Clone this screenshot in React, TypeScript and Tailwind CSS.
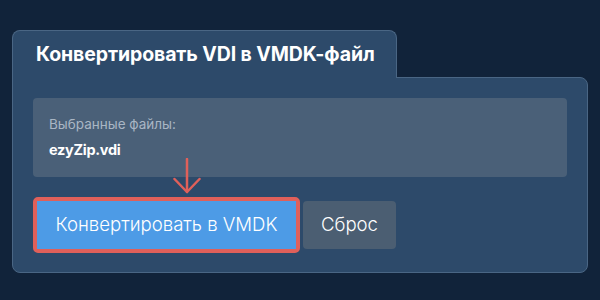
import React from "react";

export default function App() {
  return (
    <div
      className="w-[600px] h-[300px] bg-[#11233a] pt-[30px] px-3"
      style={{ fontFamily: "Inter, 'Noto Sans', sans-serif" }}
    >
      <div className="flex flex-col w-[576px]">
        <div className="relative z-10 -mb-px w-[385px] rounded-t-lg border border-b-0 border-[#4a6684] bg-[#2d4a6a] pl-[23px] pr-5 pt-[11px] pb-[12px]">
          <div className="text-[19.5px] leading-6 font-bold text-white tracking-[-0.1px]">
            Конвертировать VDI в VMDK-файл
          </div>
        </div>
        <div className="relative rounded-lg rounded-tl-none border border-[#4a6684] bg-[#2d4a6a] px-5 pt-5 pb-[19px]">
          <div className="rounded bg-[#4a6078] px-4 pt-4 pb-[15px]">
            <div className="text-[13.5px] leading-5 text-[#a9b6c4]">Выбранные файлы:</div>
            <div className="mt-1 text-[14.5px] leading-6 font-bold text-white tracking-[-0.3px]">ezyZip.vdi</div>
          </div>
          <div className="relative mt-5 flex items-center">
            <svg
              className="absolute left-[140px] top-[-39px]"
              width="28"
              height="37"
              viewBox="0 0 28 37"
              fill="none"
            >
              <path d="M14 1 V34" stroke="#e0605a" strokeWidth="2.5" strokeLinecap="round" />
              <path d="M1.5 21 L14 34 L26.5 21" stroke="#e0605a" strokeWidth="2.5" strokeLinecap="round" strokeLinejoin="round" />
            </svg>
            <div className="rounded-[5px] border-4 border-[#e0605a] bg-[#e0605a]">
              <button className="h-12 w-[259px] bg-[#4d9be6] text-[18.6px] font-light text-white">
                Конвертировать в VMDK
              </button>
            </div>
            <button className="ml-[3px] h-12 w-[93px] rounded-[4px] bg-[#4b5e72] text-[18.6px] font-light text-white">
              Сброс
            </button>
          </div>
        </div>
      </div>
    </div>
  );
}
